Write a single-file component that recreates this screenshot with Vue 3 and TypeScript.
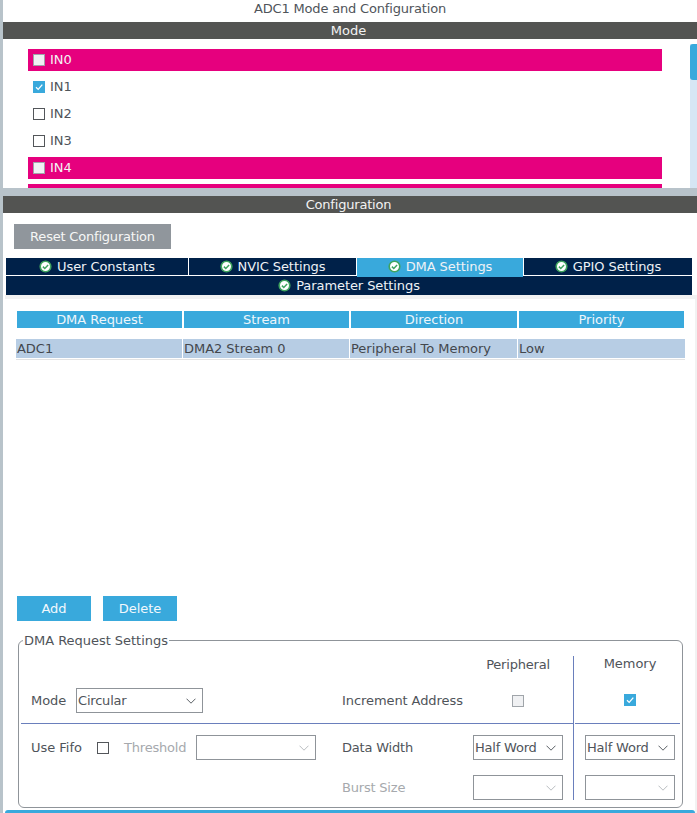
<script setup lang="ts">
const channels = [
  { name: 'IN0', state: 'warn' },
  { name: 'IN1', state: 'checked' },
  { name: 'IN2', state: 'plain' },
  { name: 'IN3', state: 'plain' },
  { name: 'IN4', state: 'warn' },
  { name: '', state: 'warn' },
]
const tabs = [
  { label: 'User Constants', width: 182, active: false },
  { label: 'NVIC Settings', width: 167, active: false },
  { label: 'DMA Settings', width: 166, active: true },
  { label: 'GPIO Settings', width: 168, active: false },
]
const headers = ['DMA Request', 'Stream', 'Direction', 'Priority']
const cells = ['ADC1', 'DMA2 Stream 0', 'Peripheral To Memory', 'Low']
</script>

<template>
  <div class="page">
    <section class="top">
      <div class="title">ADC1 Mode and Configuration</div>
      <div class="bar">Mode</div>
      <div class="list-wrap">
        <ul class="list">
          <li v-for="c in channels" :key="c.name" class="row" :class="{ warn: c.state === 'warn' }">
            <span class="cb" :class="c.state === 'warn' ? 'cb-off' : c.state === 'checked' ? 'cb-on' : 'cb-plain'">
              <svg v-if="c.state === 'checked'" width="12" height="12" viewBox="0 0 12 12"><path d="M3 6.2l2.2 2.2L9.3 3.6" fill="none" stroke="#fff" stroke-width="1.3" /></svg>
            </span>
            <span class="row-text">{{ c.name }}</span>
          </li>
        </ul>
        <div class="track"><div class="thumb"></div></div>
      </div>
    </section>

    <section class="config">
      <div class="bar tight">Configuration</div>
      <button class="reset">Reset Configuration</button>
      <div class="tabs">
        <div class="tab-row">
          <div v-for="t in tabs" :key="t.label" class="tab" :class="{ active: t.active }" :style="{ width: t.width + 'px' }">
            <svg class="ok" width="13" height="13" viewBox="0 0 13 13"><circle cx="6.5" cy="6.5" r="5.3" fill="#fff" stroke="#3fa45f" stroke-width="1.6" /><path d="M3.9 6.6l1.9 1.9 3.3-3.5" fill="none" stroke="#3fa45f" stroke-width="1.5" /></svg>
            <span>{{ t.label }}</span>
          </div>
        </div>
        <div class="tab wide">
          <svg class="ok" width="13" height="13" viewBox="0 0 13 13"><circle cx="6.5" cy="6.5" r="5.3" fill="#fff" stroke="#3fa45f" stroke-width="1.6" /><path d="M3.9 6.6l1.9 1.9 3.3-3.5" fill="none" stroke="#3fa45f" stroke-width="1.5" /></svg>
          <span>Parameter Settings</span>
        </div>
      </div>

      <div class="panel">
        <div class="thead">
          <div v-for="h in headers" :key="h" class="th">{{ h }}</div>
        </div>
        <div class="tbody">
          <div v-for="c in cells" :key="c" class="td">{{ c }}</div>
        </div>
        <div class="spacer"></div>
        <div class="actions">
          <button class="action">Add</button>
          <button class="action">Delete</button>
        </div>
        <fieldset class="fs">
          <legend>DMA Request Settings</legend>
          <div class="fs-grid">
            <div class="left top-left">
              <div class="mode-group">
                <span class="lbl mode-lbl">Mode</span>
                <div class="select mode-sel"><span>Circular</span><svg class="chev" width="10" height="6" viewBox="0 0 10 6"><path d="M.5 .7L5 5.2 9.5 .7" fill="none" stroke="#5b6066" /></svg></div>
              </div>
              <div class="addr-group">
                <span class="lbl addr-lbl">Increment Address</span>
                <div class="periph">
                  <span class="lbl periph-head">Peripheral</span>
                  <span class="cb cb-off"></span>
                </div>
              </div>
            </div>
            <div class="right top-right">
              <span class="lbl mem-head">Memory</span>
              <span class="cb cb-on"><svg width="12" height="12" viewBox="0 0 12 12"><path d="M3 6.2l2.2 2.2L9.3 3.6" fill="none" stroke="#fff" stroke-width="1.3" /></svg></span>
            </div>
            <div class="left bottom-left">
              <div class="fifo-group">
                <span class="lbl fifo-lbl">Use Fifo</span>
                <span class="cb cb-plain"></span>
                <span class="lbl muted thr-lbl">Threshold</span>
                <div class="select thr-sel disabled"><svg class="chev" width="10" height="6" viewBox="0 0 10 6"><path d="M.5 .7L5 5.2 9.5 .7" fill="none" stroke="#b9bdc1" /></svg></div>
              </div>
              <div class="width-group">
                <div class="line">
                  <span class="lbl line-lbl">Data Width</span>
                  <div class="select small"><span>Half Word</span><svg class="chev" width="10" height="6" viewBox="0 0 10 6"><path d="M.5 .7L5 5.2 9.5 .7" fill="none" stroke="#5b6066" /></svg></div>
                </div>
                <div class="line">
                  <span class="lbl line-lbl muted">Burst Size</span>
                  <div class="select small disabled"><svg class="chev" width="10" height="6" viewBox="0 0 10 6"><path d="M.5 .7L5 5.2 9.5 .7" fill="none" stroke="#b9bdc1" /></svg></div>
                </div>
              </div>
            </div>
            <div class="right bottom-right">
              <div class="select small"><span>Half Word</span><svg class="chev" width="10" height="6" viewBox="0 0 10 6"><path d="M.5 .7L5 5.2 9.5 .7" fill="none" stroke="#5b6066" /></svg></div>
              <div class="select small disabled"><svg class="chev" width="10" height="6" viewBox="0 0 10 6"><path d="M.5 .7L5 5.2 9.5 .7" fill="none" stroke="#b9bdc1" /></svg></div>
            </div>
          </div>
        </fieldset>
        <div class="bluebar"></div>
      </div>
    </section>
  </div>
</template>

<style>
html, body { margin: 0; padding: 0; background: #b8c3ca; overflow: hidden; }
</style>

<style scoped>
.page {
  width: 697px;
  height: 813px;
  box-sizing: border-box;
  padding-left: 3px;
  background: #b8c3ca;
  overflow: hidden;
  font-family: "DejaVu Sans", sans-serif;
  font-size: 13px;
  letter-spacing: -0.03px;
  color: #4f545a;
}
.top { height: 188px; background: #fff; display: flex; flex-direction: column; overflow: hidden; }
.title { height: 22px; line-height: 17px; text-align: center; flex: none; letter-spacing: -0.17px; }
.bar {
  height: 17px;
  line-height: 17px;
  background: #535452;
  color: #f2f2f2;
  text-align: center;
  flex: none;
  padding-right: 3px;
}
.bar.tight { letter-spacing: -0.2px; }
.list-wrap { position: relative; flex: 1; min-height: 0; overflow: hidden; }
.list { list-style: none; margin: 0; padding: 10px 0 0 25px; width: 634px; }
.row {
  height: 22px;
  margin-bottom: 5px;
  display: flex;
  align-items: center;
  gap: 5px;
  padding-left: 5px;
}
.row-text { position: relative; top: -1px; }
.row.warn { background: #e6007e; color: #f4f4f4; }
.cb {
  width: 12px;
  height: 12px;
  box-sizing: border-box;
  flex: none;
  display: inline-block;
  position: relative;
}
.cb svg { display: block; }
.cb-off { background: #f0f1f3; border: 1px solid #a0a5aa; }
.cb-on { background: #39a9dc; }
.cb-plain { background: #fff; border: 1px solid #53565a; }
.track {
  position: absolute;
  top: 5px;
  right: 0;
  bottom: 0;
  width: 7px;
  background: #d6e6f4;
}
.thumb { height: 36px; background: #39a9dc; border-radius: 3px 0 0 3px; }

.config {
  margin-top: 8px;
  height: 617px;
  background: #fff;
  display: flex;
  flex-direction: column;
}
.reset {
  width: 157px;
  height: 25px;
  margin: 11px 0 9px 11px;
  border: 0;
  padding: 0;
  background: #90969c;
  color: #f6f6f6;
  font: inherit;
  letter-spacing: -0.2px;
  flex: none;
}
.tabs { margin-left: 3px; width: 686px; flex: none; }
.tab-row { display: flex; gap: 1px; height: 18px; }
.tab {
  display: flex;
  align-items: center;
  justify-content: center;
  gap: 5px;
  background: #002149;
  color: #eef2f6;
  height: 17px;
  flex: none;
  letter-spacing: -0.08px;
}
.tab.active { background: #39a9dc; height: 19px; position: relative; padding-bottom: 2px; box-sizing: border-box; }
.tab.wide { height: 19px; }
.ok { flex: none; }
.panel {
  margin: 0 0 0 2px;
  padding: 12px 0 5px 0;
  flex: 1;
  min-height: 0;
  display: flex;
  flex-direction: column;
  background: #fff;
  border-top: 4px solid #f2f2f2;
  border-right: 2px solid #f2f2f2;
  box-sizing: border-box;
  position: relative;
}
.thead { display: grid; grid-template-columns: 165px 165px 166px 165px; gap: 2px; margin-left: 12px; flex: none; }
.th {
  height: 17px;
  line-height: 17px;
  background: #39a9dc;
  color: #eef6fb;
  text-align: center;
}
.tbody { display: grid; grid-template-columns: 166px 166px 167px 167px; gap: 1px; margin: 11px 0 0 11px; width: 669px; height: 20px; border-bottom: 1px solid #e3e3e3; flex: none; }
.td {
  background: #b7cde4;
  padding-left: 1px;
  line-height: 19px;
  height: 19px;
  color: #43474d;
  white-space: nowrap;
}
.spacer { flex: 1; }
.actions { display: flex; gap: 12px; margin-left: 12px; flex: none; }
.action {
  width: 74px;
  height: 25px;
  background: #39a9dc;
  border: 0;
  padding: 0;
  color: #f2f8fc;
  font: inherit;
}
.fs {
  margin: 12px 0 0 13px;
  padding: 8px 2px 7px 2px;
  width: 665px;
  height: 175px;
  box-sizing: border-box;
  border: 1px solid #8f9499;
  border-radius: 6px;
  flex: none;
  min-width: 0;
}
legend { padding: 0 1px; margin-left: 2px; line-height: 15px; }
.fs-grid { display: grid; grid-template-columns: 552px 107px; grid-template-rows: 68px 76px; }
.left, .right { box-sizing: border-box; }
.top-left { border-bottom: 1px solid #6a7fbc; display: flex; align-items: flex-end; padding-bottom: 10px; }
.mode-group { display: flex; align-items: center; width: 321px; padding-left: 10px; box-sizing: border-box; }
.mode-lbl { width: 45px; }
.mode-sel { width: 127px; }
.addr-group { display: flex; align-items: flex-end; }
.addr-lbl { width: 131px; line-height: 25px; letter-spacing: -0.08px; }
.periph { width: 90px; display: flex; flex-direction: column; align-items: center; }
.periph-head { height: 38px; line-height: 16px; margin-top: -14px; letter-spacing: -0.2px; }
.periph .cb { margin-bottom: 6px; }
.top-right {
  border-left: 1px solid #6a7fbc;
  display: flex;
  flex-direction: column;
  align-items: center;
  padding-left: 6px;
  position: relative;
}
.top-right::after {
  content: '';
  position: absolute;
  left: 1px;
  right: 0;
  bottom: 0;
  height: 1px;
  background: #6a7fbc;
}
.mem-head { line-height: 16px; height: 38px; }
.bottom-left { display: flex; padding-top: 11px; }
.fifo-group { display: flex; align-items: center; width: 321px; height: 25px; padding-left: 10px; box-sizing: border-box; }
.fifo-lbl { width: 66px; }
.thr-lbl { width: 72px; margin-left: 15px; letter-spacing: -0.2px; }
.thr-sel { width: 120px; }
.width-group { display: flex; flex-direction: column; gap: 15px; }
.line { display: flex; align-items: center; height: 25px; }
.line-lbl { width: 131px; letter-spacing: -0.2px; }
.bottom-right {
  border-left: 1px solid #6a7fbc;
  padding: 11px 0 0 11px;
  display: flex;
  flex-direction: column;
  gap: 15px;
}
.select {
  height: 25px;
  box-sizing: border-box;
  border: 1px solid #8f9499;
  display: flex;
  align-items: center;
  justify-content: space-between;
  padding: 0 6px 0 1px;
  flex: none;
  color: #4f545a;
  letter-spacing: -0.2px;
}
.select .chev { margin-left: auto; flex: none; }
.select.small { width: 90px; }
.lbl { white-space: nowrap; }
.muted { color: #a6a9ad; }
.bluebar {
  position: absolute;
  left: 0;
  right: 0;
  bottom: 0;
  height: 3px;
  background: #39a9dc;
  border-radius: 3px 3px 0 0;
}
</style>
